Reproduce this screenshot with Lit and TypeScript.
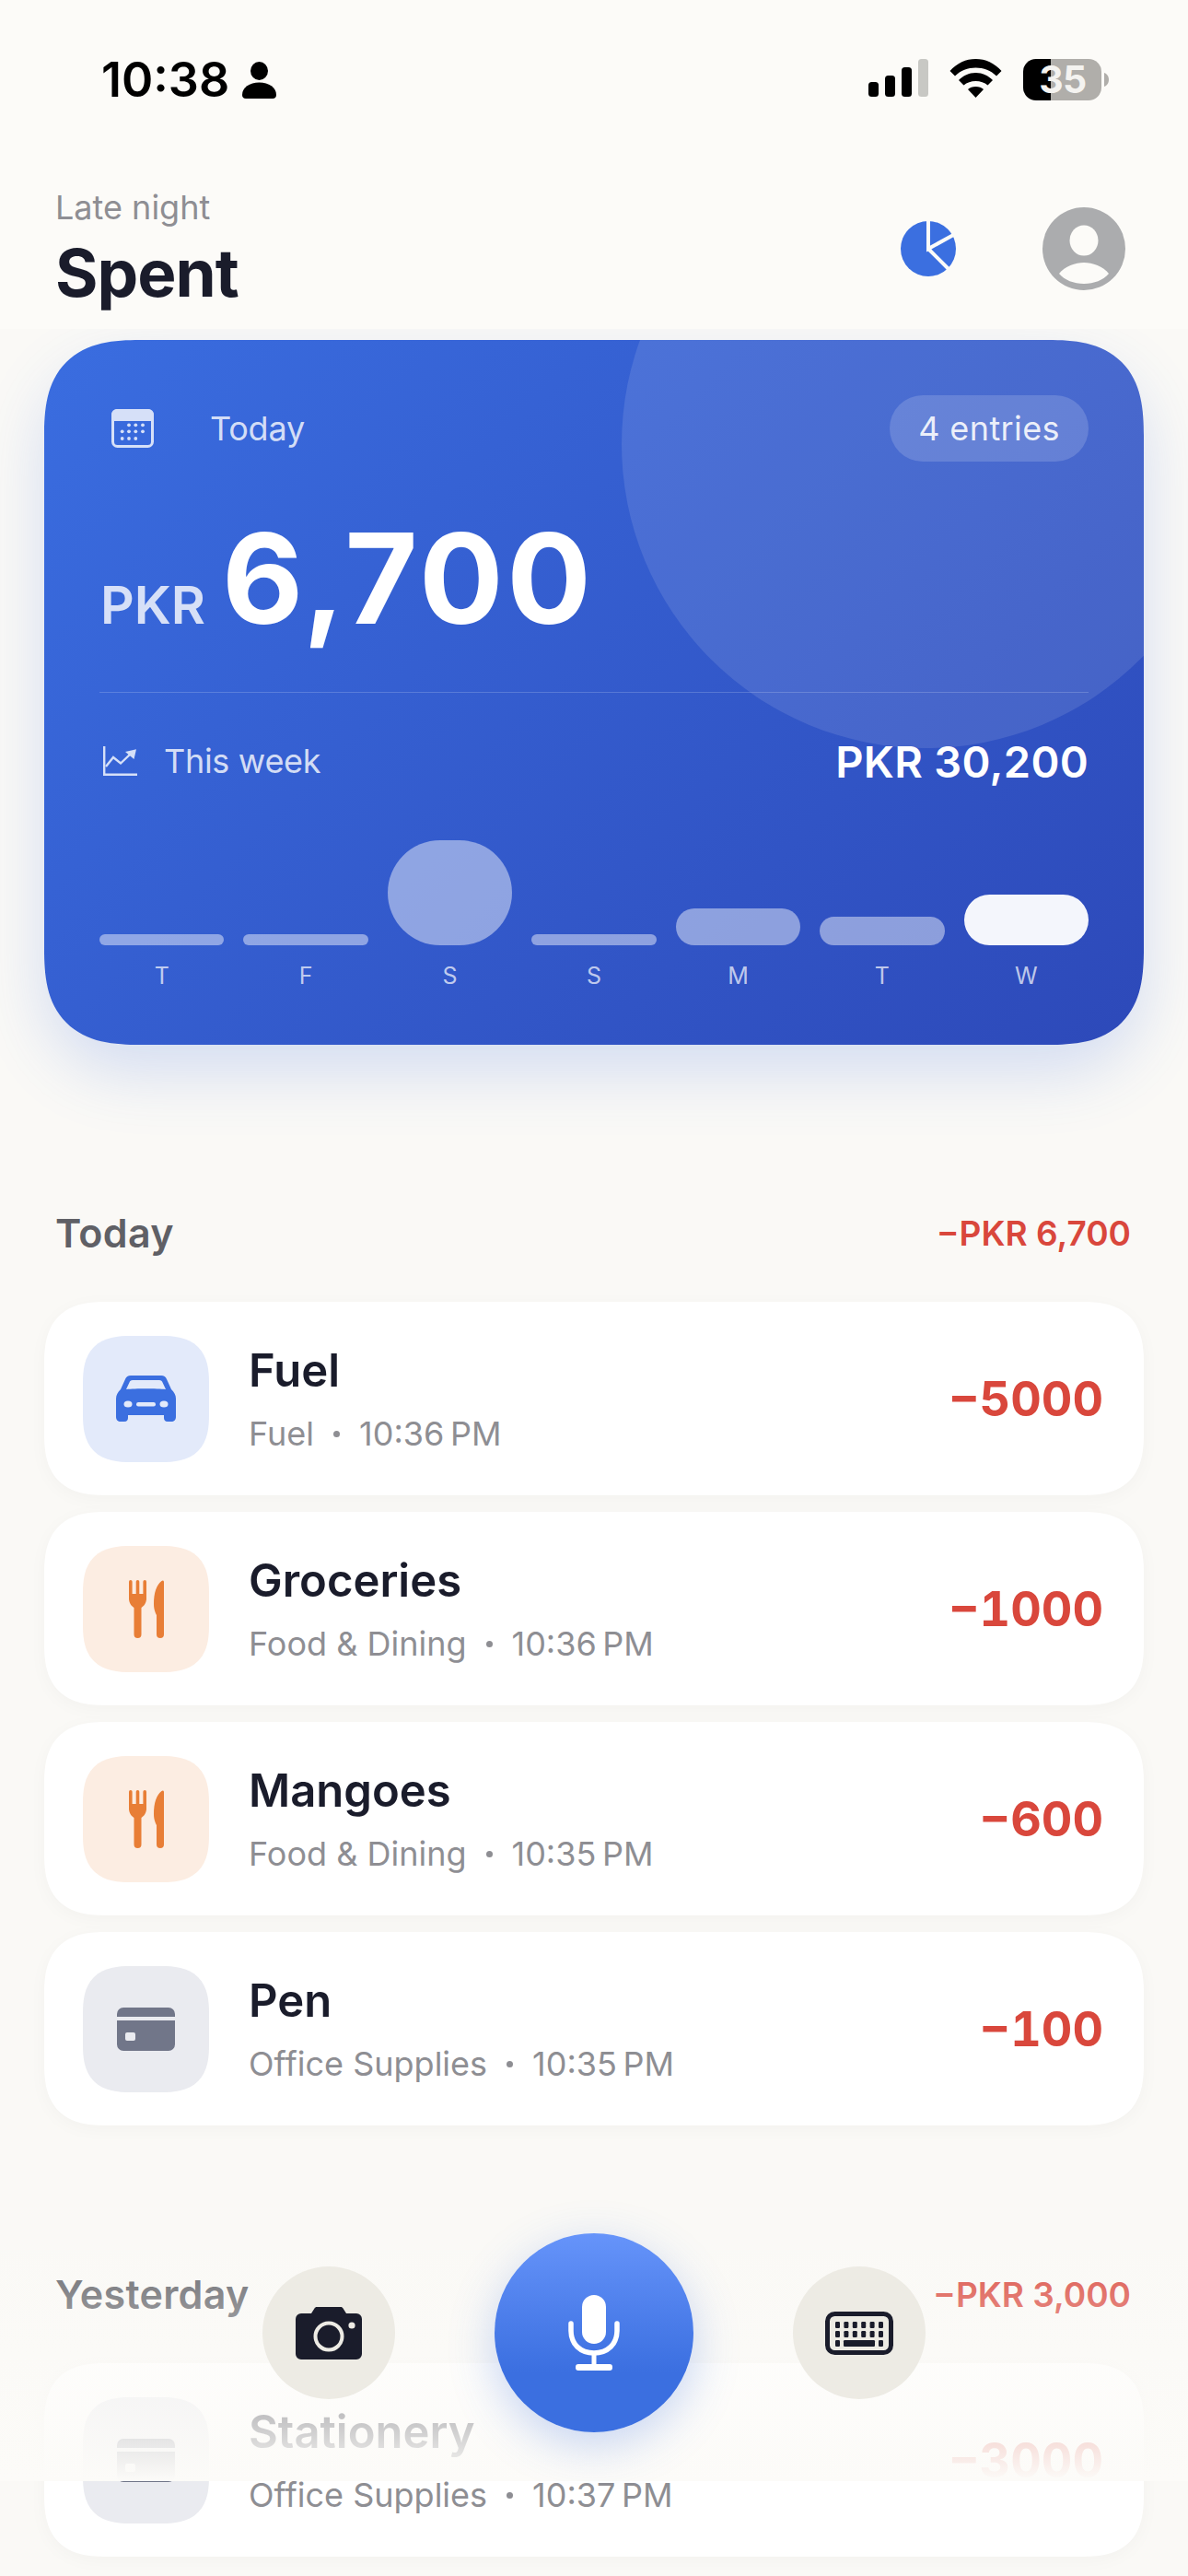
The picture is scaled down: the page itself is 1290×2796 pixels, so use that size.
import { LitElement, html, css, svg } from 'lit'
import { customElement } from 'lit/decorators.js'

type Expense = { title: string; sub: string; time: string; amount: string; kind: 'car' | 'food' | 'pay' }

const today: Expense[] = [
    { title: 'Fuel', sub: 'Fuel', time: '10:36', amount: '−5000', kind: 'car' },
    { title: 'Groceries', sub: 'Food & Dining', time: '10:36', amount: '−1000', kind: 'food' },
    { title: 'Mangoes', sub: 'Food & Dining', time: '10:35', amount: '−600', kind: 'food' },
    { title: 'Pen', sub: 'Office Supplies', time: '10:35', amount: '−100', kind: 'pay' },
]
const yesterday: Expense[] = [
    { title: 'Stationery', sub: 'Office Supplies', time: '10:37', amount: '−3000', kind: 'pay' },
]

const week = [
    { day: 'T', height: 12, today: false },
    { day: 'F', height: 12, today: false },
    { day: 'S', height: 114, today: false },
    { day: 'S', height: 12, today: false },
    { day: 'M', height: 40, today: false },
    { day: 'T', height: 31, today: false },
    { day: 'W', height: 55, today: true },
]

const carIcon = html`<svg width="65" height="50" viewBox="0 0 65 50">
    <path fill="#3b6fe0" fill-rule="evenodd" d="M16 0H49C52 0 54 1.5 55 4L60 15C63 18 65 21 65 25V45C65 48 63 50 60 50H56C53 50 52 48 52 46V43H13V46C13 48 12 50 9 50H5C2 50 0 48 0 45V25C0 21 2 18 5 15L10 4C11 1.5 13 0 16 0ZM18 5C16 5 15 6 14.5 7.5L11 15C21 14 44 14 54 15L50.5 7.5C50 6 49 5 47 5Z"/>
    <ellipse cx="13" cy="31" rx="4.5" ry="3.5" fill="#e3eafa"/>
    <ellipse cx="52" cy="31" rx="4.5" ry="3.5" fill="#e3eafa"/>
    <rect x="22" y="29" width="21" height="4.5" rx="2.2" fill="#e3eafa"/>
</svg>`

const foodIcon = html`<svg width="38" height="63" viewBox="0 0 38 63" fill="#e87e36">
    <rect x="0" y="0" width="3.6" height="22" rx="1.8"/>
    <rect x="7.7" y="0" width="3.6" height="22" rx="1.8"/>
    <rect x="15.4" y="0" width="3.6" height="22" rx="1.8"/>
    <path d="M0 15V20C0 26 4 29 5.5 30V59A4 4 0 0 0 13.5 59V30C15 29 19 26 19 20V15Z"/>
    <path d="M38 2C38 .5 36.5 0 35.5 1C30 5 27 14 27 26C27 32 29 36 30 38V59A4 4 0 0 0 38 59Z"/>
</svg>`

const payIcon = html`<svg width="63" height="47" viewBox="0 0 63 47">
    <path fill="#717689" d="M7 0H56A7 7 0 0 1 63 7V10H0V7A7 7 0 0 1 7 0ZM0 14H63V40A7 7 0 0 1 56 47H7A7 7 0 0 1 0 40Z"/>
    <rect x="9" y="27" width="11" height="9" rx="2" fill="#eaebf0"/>
</svg>`

const icons = { car: carIcon, food: foodIcon, pay: payIcon }

const calendarDots = [
    [19, 17.3], [26.3, 17.3], [34, 17.3],
    [11.7, 24.3], [19, 24.3], [26.3, 24.3], [34, 24.3],
    [11.7, 32], [19, 32], [26.3, 32],
]

@customElement('app-root')
export class AppRoot extends LitElement {
    static styles = css`
        :host {
            display: block;
            position: relative;
            width: 1290px;
            height: 2796px;
            overflow: hidden;
            background: #faf9f6;
            font-family: Inter, 'Liberation Sans', sans-serif;
            color: #1a1c2b;
        }

        .top {
            position: relative;
            z-index: 2;
            height: 357px;
            box-sizing: border-box;
            background: #fcfbf8;
        }

        .status {
            display: flex;
            justify-content: space-between;
            align-items: flex-start;
            padding: 62px 86px 0 110px;
            height: 140px;
            box-sizing: border-box;
        }

        .clock {
            display: flex;
            align-items: center;
            gap: 14px;
            font-size: 52px;
            line-height: 50px;
            font-weight: 600;
            color: #000;
        }

        .indicators {
            display: flex;
            align-items: flex-start;
            gap: 23px;
            margin-top: 2px;
        }

        .battery {
            position: relative;
            width: 93px;
            height: 45px;
        }

        .battery span {
            position: absolute;
            left: 16px;
            top: 0;
            width: 54px;
            text-align: center;
            font-size: 41px;
            line-height: 45px;
            font-weight: 700;
            letter-spacing: -0.5px;
            color: #f4f3f0;
        }

        .heading {
            display: flex;
            justify-content: space-between;
            align-items: center;
            padding: 63px 68px 0 60px;
        }

        .eyebrow {
            font-size: 36px;
            line-height: 44px;
            margin-bottom: 11px;
            color: #8e8e93;
        }

        .title {
            font-size: 71px;
            line-height: 76px;
            font-weight: 700;
            letter-spacing: -1px;
        }

        .actions {
            display: flex;
            align-items: center;
            gap: 94px;
            margin-top: 3px;
        }

        .content {
            display: flex;
            flex-direction: column;
            padding: 12px 48px 0;
        }

        .card {
            position: relative;
            overflow: hidden;
            height: 765px;
            box-sizing: border-box;
            padding: 60px 60px 0;
            border-radius: 104px;
            corner-shape: superellipse(1.4);
            color: #fff;
            background: linear-gradient(135deg, #3a6de0 0%, #2d49b9 100%);
        }

        .card-wrap {
            border-radius: 90px;
            box-shadow: 0 30px 70px rgba(59, 111, 224, 0.2);
        }

        .blob {
            position: absolute;
            left: 627px;
            top: -217px;
            width: 660px;
            height: 660px;
            border-radius: 50%;
            background: rgba(255, 255, 255, 0.11);
        }

        .card-top {
            position: relative;
            display: flex;
            align-items: center;
            justify-content: space-between;
            height: 72px;
            margin-bottom: 67px;
        }

        .card-label {
            display: flex;
            align-items: center;
            gap: 61px;
            padding-left: 13px;
            font-size: 36px;
            letter-spacing: -0.2px;
            color: rgba(255, 255, 255, 0.8);
        }

        .pill {
            padding: 0 31px;
            height: 72px;
            line-height: 72px;
            border-radius: 36px;
            background: rgba(255, 255, 255, 0.16);
            font-size: 36px;
            letter-spacing: 0.4px;
            color: rgba(255, 255, 255, 0.88);
        }

        .total {
            position: relative;
            display: flex;
            align-items: baseline;
            gap: 18px;
            padding-left: 1px;
            height: 135px;
            line-height: 120px;
        }

        .total small {
            font-size: 57px;
            font-weight: 600;
            color: rgba(255, 255, 255, 0.8);
        }

        .total strong {
            font-size: 136px;
            font-weight: 700;
            letter-spacing: 3.6px;
        }

        .rule {
            position: relative;
            height: 1px;
            margin-top: 48px;
            background: rgba(255, 255, 255, 0.18);
        }

        .week {
            position: relative;
            display: flex;
            align-items: center;
            justify-content: space-between;
            height: 48px;
            margin-top: 50px;
        }

        .week-label {
            display: flex;
            align-items: center;
            gap: 29px;
            padding-left: 4px;
            font-size: 36px;
            letter-spacing: -0.3px;
            color: rgba(255, 255, 255, 0.8);
        }

        .week-total {
            font-size: 47px;
            font-weight: 600;
            letter-spacing: 0.3px;
        }

        .bars {
            position: relative;
            display: grid;
            grid-template-columns: repeat(7, 1fr);
            column-gap: 21px;
            align-items: end;
            height: 163px;
            margin-top: 13px;
        }

        .bar {
            border-radius: 57px;
            background: rgba(255, 255, 255, 0.45);
        }

        .bar.now {
            background: rgba(255, 255, 255, 0.95);
        }

        .days {
            display: grid;
            grid-template-columns: repeat(7, 1fr);
            column-gap: 21px;
            margin-top: 19px;
            font-size: 25px;
            line-height: 28px;
            text-align: center;
            color: rgba(255, 255, 255, 0.7);
        }

        .section-head {
            display: flex;
            align-items: center;
            justify-content: space-between;
            height: 52px;
            padding: 0 14px 0 12px;
            margin-bottom: 49px;
        }

        .section-head.first {
            margin-top: 178px;
        }

        .section-head.second {
            margin-top: 157px;
        }

        .section-head h2 {
            margin: 0;
            font-size: 43px;
            font-weight: 600;
            letter-spacing: 0.3px;
            color: #5f6066;
        }

        .section-head span {
            font-size: 37px;
            font-weight: 600;
            color: #d9473c;
        }

        .rows {
            display: flex;
            flex-direction: column;
            gap: 18px;
        }

        .row {
            display: flex;
            align-items: center;
            height: 210px;
            box-sizing: border-box;
            padding: 0 44px 0 42px;
            border-radius: 68px;
            corner-shape: superellipse(1.4);
            background: #fff;
            box-shadow: 0 4px 20px rgba(26, 28, 43, 0.03);
        }

        .tile {
            flex: none;
            display: flex;
            align-items: center;
            justify-content: center;
            width: 137px;
            height: 137px;
            border-radius: 52px;
            corner-shape: superellipse(1.4);
        }

        .tile.car {
            background: #e3eafa;
        }

        .tile.food {
            background: #fcede2;
        }

        .tile.pay {
            background: #eaebf0;
        }

        .row-text {
            flex: 1;
            margin-left: 43px;
        }

        .row-title {
            font-size: 49px;
            line-height: 60px;
            font-weight: 600;
        }

        .row-sub {
            display: flex;
            align-items: center;
            gap: 21px;
            margin-top: 16px;
            font-size: 36px;
            line-height: 44px;
            color: #8e8e93;
        }

        .row-sub i {
            width: 7px;
            height: 7px;
            border-radius: 50%;
            background: #8e8e93;
        }

        .amount {
            font-size: 52px;
            font-weight: 700;
            font-variant-numeric: tabular-nums;
            color: #d9473c;
        }

        .dock {
            position: absolute;
            z-index: 3;
            left: 0;
            right: 0;
            top: 2420px;
            height: 273px;
            box-sizing: border-box;
            padding-bottom: 49px;
            display: flex;
            align-items: center;
            justify-content: center;
            gap: 108px;
            background: linear-gradient(to bottom, rgba(252, 251, 248, 0), rgba(252, 251, 248, 1));
        }

        .side {
            display: flex;
            align-items: center;
            justify-content: center;
            width: 144px;
            height: 144px;
            border-radius: 50%;
            background: #edebe4;
        }

        .mic {
            display: flex;
            align-items: center;
            justify-content: center;
            width: 216px;
            height: 216px;
            border-radius: 50%;
            background: linear-gradient(to bottom, #6694fa 0%, #3b6fe0 70%);
            box-shadow: 0 14px 50px rgba(59, 111, 224, 0.28);
        }
    `

    private renderRow(e: Expense) {
        return html`
            <div class="row">
                <div class="tile ${e.kind}">${icons[e.kind]}</div>
                <div class="row-text">
                    <div class="row-title">${e.title}</div>
                    <div class="row-sub">
                        <span>${e.sub}</span><i></i><span>${e.time}\u2009PM</span>
                    </div>
                </div>
                <div class="amount">${e.amount}</div>
            </div>
        `
    }

    private renderStatus() {
        return html`
            <div class="status">
                <div class="clock">
                    10:38
                    <svg width="37" height="40" viewBox="0 0 37 40" fill="#000">
                        <ellipse cx="18.5" cy="10" rx="9.5" ry="10"/>
                        <path d="M0 36C0 28 8 22.5 18.5 22.5C29 22.5 37 28 37 36C37 38.5 35.5 40 33 40H4C1.5 40 0 38.5 0 36Z"/>
                    </svg>
                </div>
                <div class="indicators">
                    <svg width="65" height="41" viewBox="0 0 65 41">
                        <rect x="0" y="25" width="11" height="16" rx="3.5" fill="#000"/>
                        <rect x="18" y="18" width="11" height="23" rx="3.5" fill="#000"/>
                        <rect x="36" y="9" width="11" height="32" rx="3.5" fill="#000"/>
                        <rect x="54" y="0" width="11" height="41" rx="3.5" fill="#c8c8c4"/>
                    </svg>
                    <svg width="57" height="42" viewBox="0 0 57 42" fill="#000">
                        <path d="M.5 13C8 4.5 18 0 28.5 0C39 0 49 4.5 56.5 13L51 18.5C45 12.5 37 9.5 28.5 9.5C20 9.5 12 12.5 6 18.5Z"/>
                        <path d="M10 23C15 18 21 15 28.5 15C36 15 42 18 47 23L41.5 28.5C38 25.5 33.5 24 28.5 24C23.5 24 19 25.5 15.5 28.5Z"/>
                        <path d="M20 33C22 31 25 30 28.5 30C32 30 35 31 37 33L28.5 42Z"/>
                    </svg>
                    <div class="battery">
                        <svg width="93" height="45" viewBox="0 0 93 45">
                            <path d="M30 0V45H14A14 14 0 0 1 0 31V14A14 14 0 0 1 14 0Z" fill="#000"/>
                            <path d="M30 0H71A14 14 0 0 1 85 14V31A14 14 0 0 1 71 45H30Z" fill="#b0aeaa"/>
                            <path d="M88 15C91 16 93 19 93 22.5C93 26 91 29 88 30Z" fill="#b0aeaa"/>
                        </svg>
                        <span>35</span>
                    </div>
                </div>
            </div>
        `
    }

    private renderHeading() {
        return html`
            <div class="heading">
                <div>
                    <div class="eyebrow">Late night</div>
                    <div class="title">Spent</div>
                </div>
                <div class="actions">
                    <svg width="60" height="60" viewBox="0 0 60 60">
                        <circle cx="30" cy="30" r="30" fill="#3b6fe0"/>
                        <path d="M30 -2V30L60 13.5M30 30L55 55" fill="none" stroke="#fcfbf8" stroke-width="4"/>
                    </svg>
                    <svg width="90" height="90" viewBox="0 0 90 90">
                        <circle cx="45" cy="45" r="45" fill="#abacae"/>
                        <ellipse cx="45" cy="36" rx="15.5" ry="16.5" fill="#fcfbf8"/>
                        <path d="M18 72C24 64 36 60 45 60C54 60 66 64 72 72C66 79 56 83 45 83C34 83 24 79 18 72Z" fill="#fcfbf8"/>
                    </svg>
                </div>
            </div>
        `
    }

    private renderCard() {
        return html`
            <div class="card-wrap">
                <div class="card">
                    <div class="blob"></div>
                    <div class="card-top">
                        <div class="card-label">
                            <svg width="46" height="42" viewBox="0 0 46 42">
                                <rect x="1.5" y="1.5" width="43" height="39" rx="5" fill="none" stroke="#d6e0f8" stroke-width="3"/>
                                <path d="M6 0H40A6 6 0 0 1 46 6V13H0V6A6 6 0 0 1 6 0Z" fill="#d6e0f8"/>
                                ${calendarDots.map(([x, y]) => svg`<circle cx=${x} cy=${y} r="1.9" fill="#d6e0f8"/>`)}
                            </svg>
                            <span>Today</span>
                        </div>
                        <div class="pill">4 entries</div>
                    </div>
                    <div class="total"><small>PKR</small><strong>6,700</strong></div>
                    <div class="rule"></div>
                    <div class="week">
                        <div class="week-label">
                            <svg width="37" height="32" viewBox="0 0 37 32" fill="none" stroke="#d6e0f8" stroke-width="2.4">
                                <path d="M1.2 0V30.8H37"/>
                                <path d="M3 22L11 12L19 18.5L29 9"/>
                                <path d="M36 3.3L33.5 14L24 6Z" fill="#d6e0f8" stroke="none"/>
                            </svg>
                            <span>This week</span>
                        </div>
                        <div class="week-total">PKR 30,200</div>
                    </div>
                    <div class="bars">
                        ${week.map(
                            (b) => html`<div class="bar ${b.today ? 'now' : ''}" style="height: ${b.height}px"></div>`
                        )}
                    </div>
                    <div class="days">${week.map((b) => html`<span>${b.day}</span>`)}</div>
                </div>
            </div>
        `
    }

    private renderDock() {
        return html`
            <div class="dock">
                <div class="side">
                    <svg width="72" height="57" viewBox="0 0 72 57">
                        <path fill="#1a1c2b" d="M6 7H17L20.5 1.5C21 .5 22 0 23 0H49C50 0 51 .5 51.5 1.5L55 7H66A6 6 0 0 1 72 13V51A6 6 0 0 1 66 57H6A6 6 0 0 1 0 51V13A6 6 0 0 1 6 7Z"/>
                        <circle cx="36" cy="32" r="14.5" fill="none" stroke="#edebe4" stroke-width="4"/>
                        <circle cx="61" cy="20" r="3.6" fill="#edebe4"/>
                    </svg>
                </div>
                <div class="mic">
                    <svg width="56" height="82" viewBox="0 0 56 82" fill="#fff">
                        <rect x="15" y="0" width="26" height="53" rx="13"/>
                        <path d="M3 31V39C3 53 13 63 28 63C43 63 53 53 53 39V31" fill="none" stroke="#fff" stroke-width="5.5" stroke-linecap="round"/>
                        <rect x="25.5" y="63" width="5" height="13"/>
                        <rect x="8" y="75" width="40" height="7" rx="3"/>
                    </svg>
                </div>
                <div class="side">
                    <svg width="74" height="47" viewBox="0 0 74 47">
                        <rect x="2.5" y="2.5" width="69" height="42" rx="8" fill="none" stroke="#1a1c2b" stroke-width="5"/>
                        ${[0, 1, 2, 3, 4, 5].map(
                            (i) => svg`
                                <rect x=${11 + i * 9.4} y="11" width="5" height="7" rx="1.2" fill="#1a1c2b"/>
                                <rect x=${11 + i * 9.4} y="21" width="5" height="7" rx="1.2" fill="#1a1c2b"/>
                            `
                        )}
                        <rect x="11" y="31" width="5" height="7" rx="1.2" fill="#1a1c2b"/>
                        <rect x="20" y="31" width="34" height="7" rx="1.2" fill="#1a1c2b"/>
                        <rect x="58" y="31" width="5" height="7" rx="1.2" fill="#1a1c2b"/>
                    </svg>
                </div>
            </div>
        `
    }

    render() {
        return html`
            <div class="top">${this.renderStatus()}${this.renderHeading()}</div>
            <div class="content">
                ${this.renderCard()}
                <div class="section-head first"><h2>Today</h2><span>−PKR 6,700</span></div>
                <div class="rows">${today.map((e) => this.renderRow(e))}</div>
                <div class="section-head second"><h2>Yesterday</h2><span>−PKR 3,000</span></div>
                <div class="rows">${yesterday.map((e) => this.renderRow(e))}</div>
            </div>
            ${this.renderDock()}
        `
    }
}
